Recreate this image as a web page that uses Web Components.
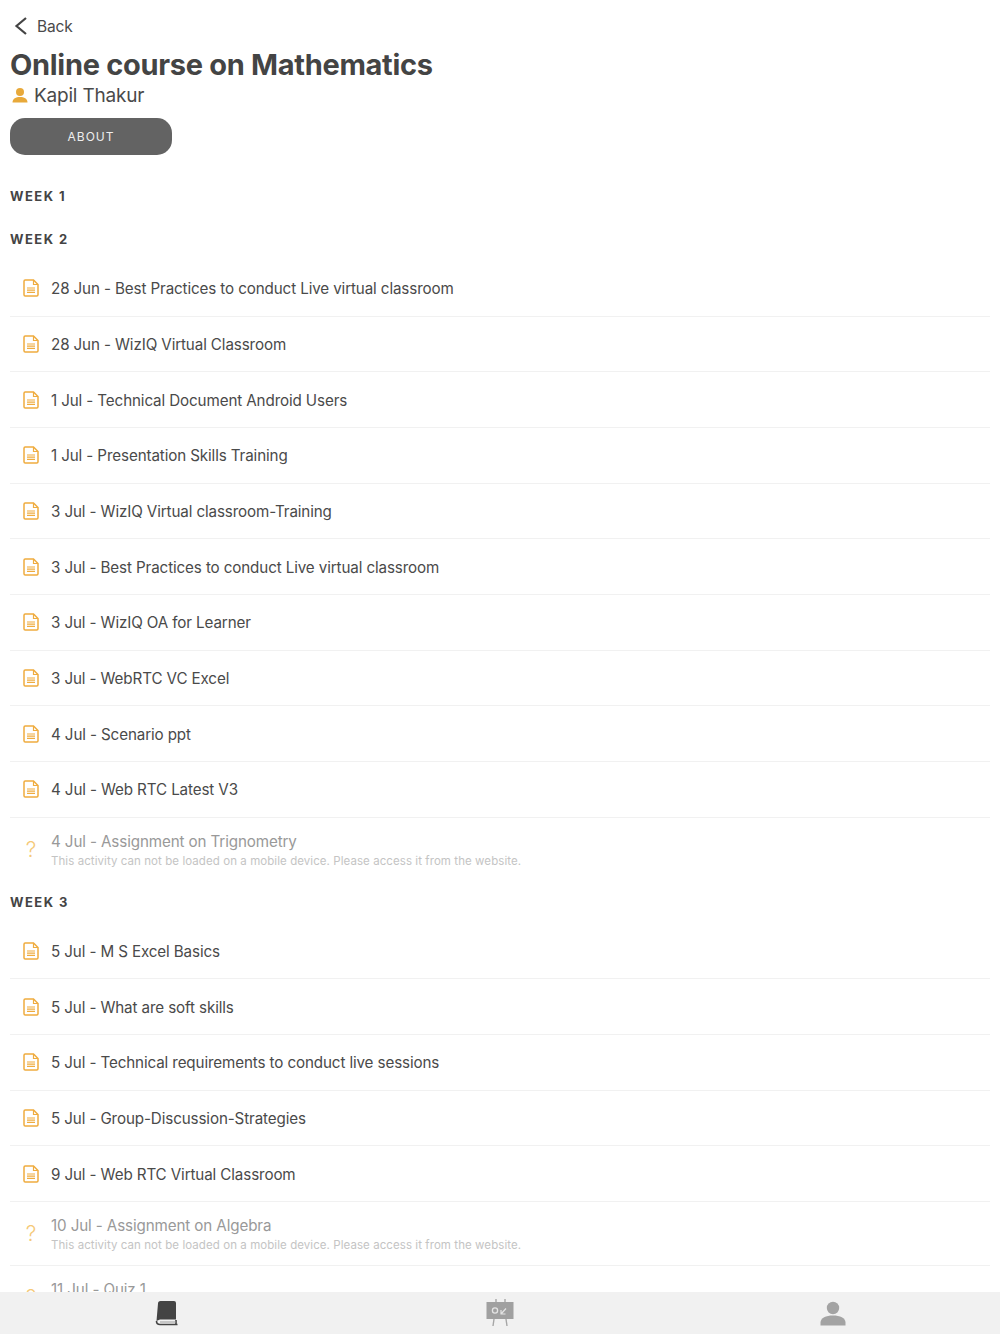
<!DOCTYPE html>
<html lang="en">
<head>
<meta charset="utf-8">
<title>Online course on Mathematics</title>
<style>
    html, body { margin: 0; height: 100%; background: #fff; font-family: Inter, "Liberation Sans", sans-serif; }
</style>
</head>
<body>
<course-app>
    <course-header title-text="Online course on Mathematics" teacher="Kapil Thakur"></course-header>
    <week-heading style="margin-top: 33px">WEEK 1</week-heading>
    <week-heading style="margin-top: 26px">WEEK 2</week-heading>
    <activity-list style="margin-top: 13px">
        <activity-row>28 Jun - Best Practices to conduct Live virtual classroom</activity-row>
        <activity-row>28 Jun - WizIQ Virtual Classroom</activity-row>
        <activity-row>1 Jul - Technical Document Android Users</activity-row>
        <activity-row>1 Jul - Presentation Skills Training</activity-row>
        <activity-row>3 Jul - WizIQ Virtual classroom-Training</activity-row>
        <activity-row>3 Jul - Best Practices to conduct Live virtual classroom</activity-row>
        <activity-row>3 Jul - WizIQ OA for Learner</activity-row>
        <activity-row>3 Jul - WebRTC VC Excel</activity-row>
        <activity-row>4 Jul - Scenario ppt</activity-row>
        <activity-row>4 Jul - Web RTC Latest V3</activity-row>
        <activity-row kind="locked" last>4 Jul - Assignment on Trignometry</activity-row>
    </activity-list>
    <week-heading style="margin-top: 12px">WEEK 3</week-heading>
    <activity-list style="margin-top: 13px">
        <activity-row>5 Jul - M S Excel Basics</activity-row>
        <activity-row>5 Jul - What are soft skills</activity-row>
        <activity-row>5 Jul - Technical requirements to conduct live sessions</activity-row>
        <activity-row>5 Jul - Group-Discussion-Strategies</activity-row>
        <activity-row>9 Jul - Web RTC Virtual Classroom</activity-row>
        <activity-row kind="locked">10 Jul - Assignment on Algebra</activity-row>
        <activity-row kind="locked">11 Jul - Quiz 1</activity-row>
    </activity-list>
</course-app>

<script>
const LOCKED_NOTE = 'This activity can not be loaded on a mobile device. Please access it from the website.';

class CourseApp extends HTMLElement {
    constructor() {
        super();
        this.attachShadow({ mode: "open" });
    }

    connectedCallback() {
        this.shadowRoot.innerHTML = `
            <style>
                :host {
                    display: flex;
                    flex-direction: column;
                    height: 1334px;
                    overflow: hidden;
                    background: #fff;
                }
                .content {
                    flex: 1;
                    min-height: 0;
                    overflow: hidden;
                    padding: 0 10px;
                }
            </style>
            <div class="content"><slot></slot></div>
            <tab-bar></tab-bar>
        `;
    }
}

class CourseHeader extends HTMLElement {
    constructor() {
        super();
        this.attachShadow({ mode: "open" });
    }

    connectedCallback() {
        const title = this.getAttribute('title-text') || '';
        const teacher = this.getAttribute('teacher') || '';

        this.shadowRoot.innerHTML = `
            <style>
                :host { display: block; color: #444; }
                .back {
                    display: flex;
                    align-items: center;
                    gap: 9px;
                    height: 26px;
                    padding: 13px 0 0 3px;
                    font-size: 15.5px;
                    letter-spacing: -0.15px;
                    color: #4a4a4a;
                }
                h1 {
                    margin: 8px 0 0;
                    font-size: 29px;
                    line-height: 36px;
                    font-weight: 700;
                    letter-spacing: -0.3px;
                    color: #444;
                }
                .teacher {
                    display: flex;
                    align-items: center;
                    gap: 5px;
                    height: 24px;
                    font-size: 19px;
                    letter-spacing: -0.2px;
                    color: #4a4a4a;
                }
                .about {
                    display: flex;
                    align-items: center;
                    justify-content: center;
                    width: 162px;
                    height: 37px;
                    margin-top: 11px;
                    border-radius: 15px;
                    background: #636363;
                    color: #eee;
                    font-size: 12px;
                    letter-spacing: 1px;
                }
            </style>
            <div class="back">
                <svg width="15" height="20" viewBox="0 0 15 20"><path d="M13 2 L3.5 10 L13 18" fill="none" stroke="#444" stroke-width="2.2"/></svg>
                <span>Back</span>
            </div>
            <h1>${title}</h1>
            <div class="teacher">
                <svg width="18" height="17" viewBox="0 0 18 17" style="margin-left:1px"><circle cx="9" cy="5" r="4" fill="#e8a93a"/><path d="M1.5 15.5 C1.5 11.5 5 10 9 10 C13 10 16.5 11.5 16.5 15.5 Z" fill="#e8a93a"/></svg>
                <span>${teacher}</span>
            </div>
            <div class="about">ABOUT</div>
        `;
    }
}

class WeekHeading extends HTMLElement {
    constructor() {
        super();
        this.attachShadow({ mode: "open" });
    }

    connectedCallback() {
        this.shadowRoot.innerHTML = `
            <style>
                :host {
                    display: block;
                    height: 17px;
                    line-height: 17px;
                    font-size: 13px;
                    font-weight: 700;
                    letter-spacing: 1.45px;
                    color: #444;
                }
            </style>
            <slot></slot>
        `;
    }
}

class ActivityList extends HTMLElement {
    constructor() {
        super();
        this.attachShadow({ mode: "open" });
    }

    connectedCallback() {
        this.shadowRoot.innerHTML = `
            <style>
                :host { display: flex; flex-direction: column; }
            </style>
            <slot></slot>
        `;
    }
}

class ActivityRow extends HTMLElement {
    constructor() {
        super();
        this.attachShadow({ mode: "open" });
    }

    connectedCallback() {
        const locked = this.getAttribute('kind') === 'locked';
        const icon = locked
            ? `<span class="mark">?</span>`
            : `<svg width="18" height="18" viewBox="0 0 18 18" fill="none" stroke="#efac3f" stroke-width="1.5">
                   <path d="M2 2.2 Q2 1 3.2 1 H11.5 L16 5.5 V15.8 Q16 17 14.8 17 H3.2 Q2 17 2 15.8 Z"/>
                   <path d="M11.5 1 V5.5 H16" stroke-width="1.2"/>
                   <path d="M5 9 H13 M5 11.2 H13 M5 13.4 H13" stroke-width="1.2"/>
               </svg>`;

        this.shadowRoot.innerHTML = `
            <style>
                :host {
                    display: flex;
                    align-items: center;
                    box-sizing: border-box;
                    height: ${locked ? '64px' : '55.67px'};
                    border-bottom: 1px solid ${this.hasAttribute('last') ? 'transparent' : '#f1f1f1'};
                    color: ${locked ? '#999' : '#4a4a4a'};
                    font-size: 15.2px;
                    letter-spacing: -0.12px;
                }
                .icon {
                    flex: none;
                    display: flex;
                    justify-content: center;
                    width: 41px;
                }
                .mark {
                    font-size: 21px;
                    font-weight: 300;
                    line-height: 24px;
                    color: #f5c978;
                    margin: 1px 0 0 1px;
                }
                .note {
                    display: block;
                    margin-top: 2px;
                    font-size: 11.5px;
                    line-height: 15px;
                    letter-spacing: 0.07px;
                    color: #c4c4c4;
                }
                .text { line-height: 20px; margin-top: 2px; }
            </style>
            <div class="icon">${icon}</div>
            <div class="text"><slot></slot>${locked ? `<span class="note">${LOCKED_NOTE}</span>` : ''}</div>
        `;
    }
}

class TabBar extends HTMLElement {
    constructor() {
        super();
        this.attachShadow({ mode: "open" });
    }

    connectedCallback() {
        this.shadowRoot.innerHTML = `
            <style>
                :host {
                    flex: none;
                    display: grid;
                    grid-template-columns: repeat(3, 1fr);
                    height: 42px;
                    background: #f1f1f1;
                }
                div { display: flex; align-items: center; justify-content: center; }
            </style>
            <div>
                <svg width="24" height="26" viewBox="0 0 24 26">
                    <path d="M3 3.5 Q3 1 5.5 1 H19 Q21 1 21 3 V19.5 H5 Q3 20 1.5 21 Z" fill="#444"/>
                    <path d="M1.5 21 Q1.5 24.5 5 24.5 H22.5 M21 20 V24" fill="none" stroke="#444" stroke-width="1.6"/>
                    <path d="M5 22 H20.5" stroke="#aaa" stroke-width="1.2"/>
                </svg>
            </div>
            <div>
                <svg width="28" height="28" viewBox="0 0 28 28">
                    <path d="M10 0 V3 M19 0 V3 M8 20 L7 27 M20 20 L21 27" stroke="#a6a6a6" stroke-width="1.4" fill="none"/>
                    <rect x="0.5" y="3" width="27" height="17" fill="#a0a0a0"/>
                    <circle cx="9" cy="11.5" r="2.6" fill="none" stroke="#e4e4e4" stroke-width="1.3"/>
                    <path d="M15 15 L20 9.5 M15 11 V15 H19.5" fill="none" stroke="#e4e4e4" stroke-width="1.2"/>
                </svg>
            </div>
            <div>
                <svg width="26" height="25" viewBox="0 0 26 25">
                    <circle cx="13" cy="7" r="6.2" fill="#a3a3a3"/>
                    <path d="M0.5 24.5 V21.5 C0.5 17 6 14.5 13 14.5 C20 14.5 25.5 17 25.5 21.5 V24.5 Z" fill="#a3a3a3"/>
                </svg>
            </div>
        `;
    }
}

customElements.define("course-app", CourseApp);
customElements.define("course-header", CourseHeader);
customElements.define("week-heading", WeekHeading);
customElements.define("activity-list", ActivityList);
customElements.define("activity-row", ActivityRow);
customElements.define("tab-bar", TabBar);
</script>
</body>
</html>
